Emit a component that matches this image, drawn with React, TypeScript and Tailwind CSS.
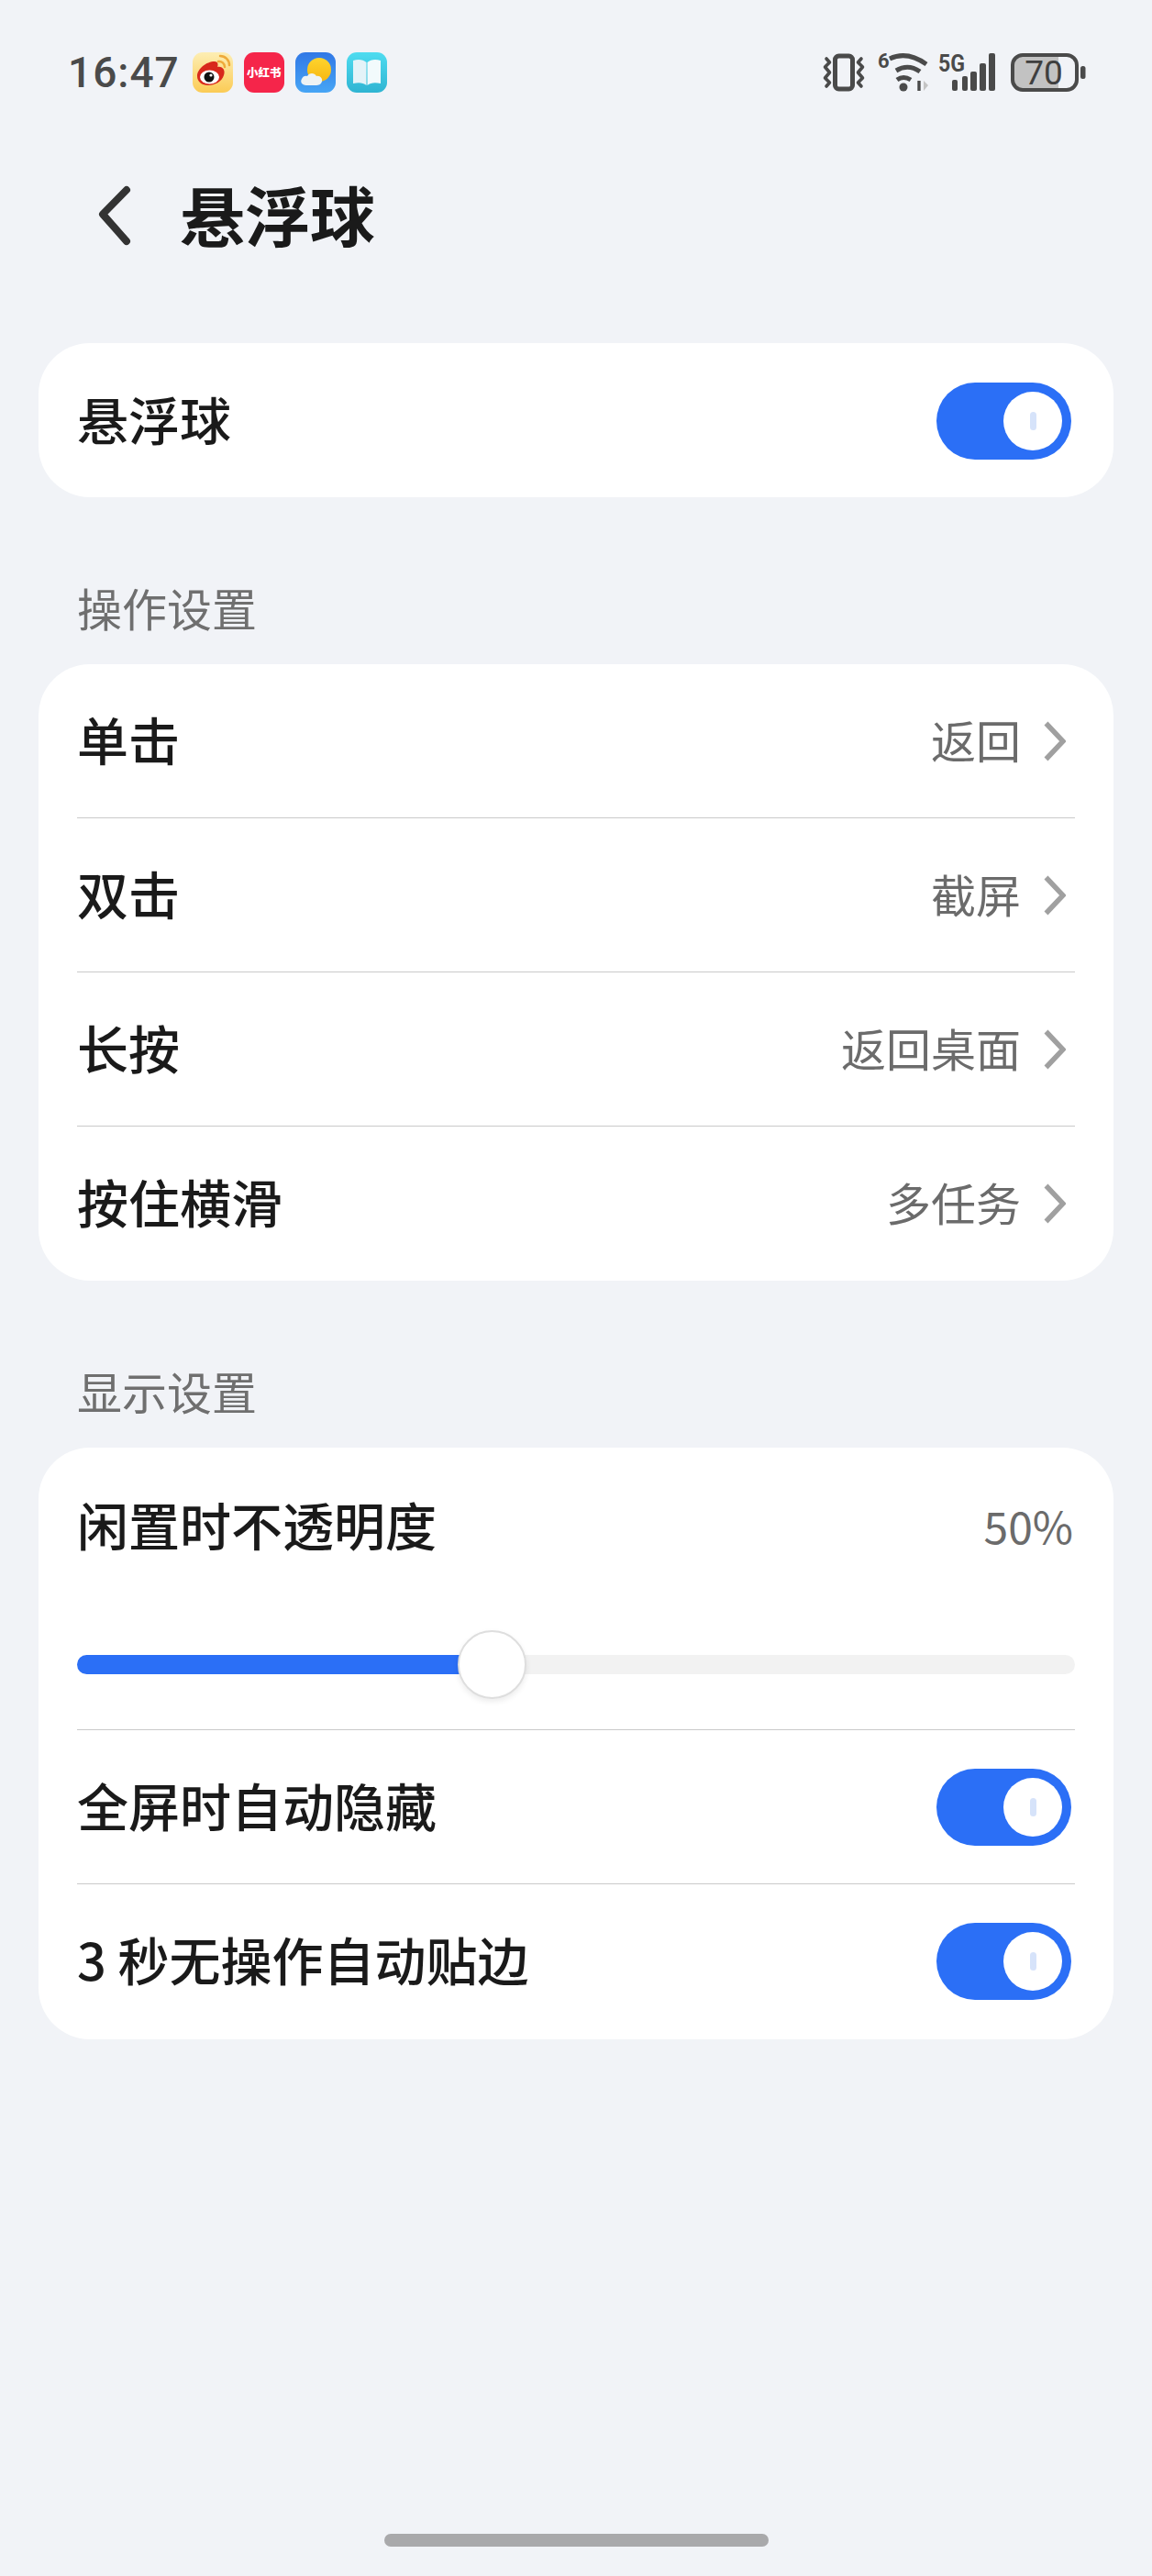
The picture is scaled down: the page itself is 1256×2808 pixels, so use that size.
const CJK = "font-['Noto_Sans_CJK_SC','Noto_Sans',sans-serif]";

function Toggle() {
  return (
    <div className="mr-[4px] flex h-[84px] w-[147px] shrink-0 items-center justify-end rounded-full bg-[#2b6ff6] pr-[10px]">
      <div className="flex h-[64px] w-[64px] items-center justify-center rounded-full bg-white">
        <div className="h-[20px] w-[7px] rounded-full bg-[#d6e3fa]" />
      </div>
    </div>
  );
}

function Chevron() {
  return (
    <svg width="24" height="44" viewBox="0 0 24 44" fill="none" stroke="#a0a0a0" strokeWidth="5.5" className="shrink-0">
      <path d="M2.5 2.5 L21 22 L2.5 41.5" />
    </svg>
  );
}

function Divider() {
  return <div className="mx-[42px] h-px bg-[#cacaca]" />;
}

function NavRow({ label, value }: { label: string; value: string }) {
  return (
    <div className="flex h-[167px] items-center justify-between px-[42px]">
      <span className="pb-[6px] text-[56px] font-medium leading-none text-[#1a1a1a]">{label}</span>
      <div className="flex items-center gap-[25px] pr-[10px]">
        <span className="pb-[5px] text-[49px] leading-none text-[#6b6b6b]">{value}</span>
        <Chevron />
      </div>
    </div>
  );
}

function ToggleRow({ label }: { label: string }) {
  return (
    <div className="flex h-[167px] items-center justify-between px-[42px]">
      <span className="pb-[6px] text-[56px] font-medium leading-none text-[#1a1a1a]">{label}</span>
      <Toggle />
    </div>
  );
}

function SectionTitle({ children }: { children: string }) {
  return <div className="mt-[90px] mb-[32px] h-[60px] px-[84px] text-[49px] leading-[60px] text-[#6f6f6f]">{children}</div>;
}

function Weibo() {
  return (
    <svg width="44" height="44" viewBox="0 0 44 44">
      <defs>
        <linearGradient id="wb" x1="0" y1="0" x2="0" y2="1">
          <stop offset="0" stopColor="#fdeeb4" />
          <stop offset="1" stopColor="#fbcb55" />
        </linearGradient>
      </defs>
      <rect width="44" height="44" rx="11" fill="url(#wb)" />
      <path d="M30 4 A10 10 0 0 1 40 14" fill="none" stroke="#eeaa3a" strokeWidth="2.5" strokeLinecap="round" />
      <path d="M28 10 A6 6 0 0 1 35 16" fill="none" stroke="#eeaa3a" strokeWidth="2.5" strokeLinecap="round" />
      <path d="M5 26 C5 18 15 10 24 10 C28 10 28 14 27 16 C33 15 36 20 34 25 C32 32 24 36 17 36 C10 36 5 32 5 26Z" fill="#d8281c" />
      <ellipse cx="18.5" cy="27" rx="10.5" ry="7.5" fill="#fff" />
      <circle cx="18" cy="27" r="5.5" fill="#111" />
      <circle cx="20" cy="25" r="1.6" fill="#fff" />
    </svg>
  );
}

function Weather() {
  return (
    <svg width="44" height="44" viewBox="0 0 44 44">
      <defs>
        <linearGradient id="sky" x1="0" y1="0" x2="0" y2="1">
          <stop offset="0" stopColor="#3178e6" />
          <stop offset="1" stopColor="#47a5f5" />
        </linearGradient>
        <linearGradient id="sun" x1="0" y1="0" x2="0" y2="1">
          <stop offset="0" stopColor="#fdd42e" />
          <stop offset="1" stopColor="#f8b710" />
        </linearGradient>
      </defs>
      <rect width="44" height="44" rx="11" fill="url(#sky)" />
      <circle cx="26" cy="19" r="13" fill="url(#sun)" />
      <path d="M12 36 C7 36 5 32 7 29 C8 26 11 25 13 26 C15 22 21 22 23 26 C27 25 30 29 29 32 C28 35 25 36 23 36Z" fill="#eef3f4" />
    </svg>
  );
}

function Book() {
  return (
    <svg width="44" height="44" viewBox="0 0 44 44">
      <defs>
        <linearGradient id="bk" x1="0" y1="0" x2="0" y2="1">
          <stop offset="0" stopColor="#4fdcf0" />
          <stop offset="1" stopColor="#2fb4d2" />
        </linearGradient>
      </defs>
      <rect width="44" height="44" rx="11" fill="url(#bk)" />
      <path d="M7 9 C13 7 18 8 21.5 11 V36 C18 33 13 32.5 7 34Z" fill="#e4f3f8" />
      <path d="M37 9 C31 7 26 8 22.5 11 V36 C26 33 31 32.5 37 34Z" fill="#f2fafc" />
    </svg>
  );
}

function StatusIcons() {
  return (
    <div className="flex items-center">
      <svg width="46" height="42" viewBox="0 0 46 42" fill="none" stroke="#4a4a4a" className="mr-[14px]">
        <rect x="13.5" y="3" width="19" height="36" rx="4" strokeWidth="5" />
        <path d="M4 6 L7.5 10 L2.5 15 L7.5 21 L2.5 27 L7.5 32 L4 36" strokeWidth="3.6" strokeLinecap="round" strokeLinejoin="round" />
        <path d="M42 6 L38.5 10 L43.5 15 L38.5 21 L43.5 27 L38.5 32 L42 36" strokeWidth="3.6" strokeLinecap="round" strokeLinejoin="round" />
      </svg>
      <svg width="56" height="42" viewBox="0 0 56 42" fill="none" className="mr-[10px] overflow-visible">
        <text x="0" y="16" fontSize="22" fontWeight="700" fill="#4a4a4a" fontFamily="Roboto, sans-serif">6</text>
        <path d="M13 6 Q32 -3 53 12" stroke="#4a4a4a" strokeWidth="5" />
        <path d="M20 19 Q33 11 46 20" stroke="#4a4a4a" strokeWidth="5" />
        <path d="M21 29 Q28 24 36 29" stroke="#4a4a4a" strokeWidth="5" />
        <circle cx="28" cy="37" r="4.5" fill="#4a4a4a" />
        <path d="M45 30 L45 41" stroke="#4a4a4a" strokeWidth="3.4" />
        <path d="M50 30 L50 41 L55 35Z" fill="#c4c4c4" />
      </svg>
      <svg width="63" height="42" viewBox="0 0 63 42" className="mr-[16px] overflow-visible" fill="#4a4a4a">
        <text x="0" y="20" fontSize="26" fontWeight="700" fontFamily="Roboto, sans-serif" textLength="29" lengthAdjust="spacingAndGlyphs">5G</text>
        <rect x="15" y="29" width="6" height="12" rx="2" />
        <rect x="26" y="25" width="6" height="16" rx="2" />
        <rect x="35" y="20" width="7" height="21" rx="2" />
        <rect x="45" y="11" width="7" height="30" rx="2" />
        <rect x="55" y="0" width="7" height="41" rx="2" />
      </svg>
      <svg width="82" height="42" viewBox="0 0 82 42" className="overflow-visible">
        <path d="M12 2 H52 V40 H12 A10 10 0 0 1 2 30 V12 A10 10 0 0 1 12 2Z" fill="#c2c2c2" />
        <rect x="2" y="2" width="70" height="38" rx="11" fill="none" stroke="#4a4a4a" strokeWidth="4" />
        <text x="36" y="34" textAnchor="middle" fontSize="37" fill="#3f3f3f" fontFamily="Roboto, sans-serif">70</text>
        <rect x="76" y="14" width="5.5" height="14" rx="2.5" fill="#4a4a4a" />
      </svg>
    </div>
  );
}

export default function App() {
  return (
    <div className={`flex h-[2808px] w-[1256px] flex-col overflow-hidden bg-[#f1f3f7] ${CJK}`}>
      {/* status bar */}
      <div className="mt-[57px] flex h-[44px] items-center justify-between pl-[74px] pr-[72px]">
        <div className="flex items-center">
          <span className="mr-[14px] font-['Roboto',sans-serif] text-[46px] font-medium leading-none tracking-[1px] text-[#4a4a4a]">16:47</span>
          <div className="flex gap-[12px]">
            <Weibo />
            <div className="flex h-[44px] w-[44px] items-center justify-center rounded-[11px] bg-[#f5254a] text-[12.5px] font-black leading-none text-white">小红书</div>
            <Weather />
            <Book />
          </div>
        </div>
        <StatusIcons />
      </div>

      {/* header */}
      <div className="mt-[89px] flex h-[90px] items-center pl-[105px]">
        <svg width="40" height="70" viewBox="0 0 40 70" fill="none" stroke="#333333" strokeWidth="8" strokeLinecap="round" strokeLinejoin="round" className="mr-[51px]">
          <path d="M33 7 L7 33.5 L33 63" />
        </svg>
        <span className="pb-[6px] text-[71px] font-bold leading-none text-[#1a1a1a]">悬浮球</span>
      </div>

      <div className="mx-[42px] mt-[94px] rounded-[56px] bg-white pt-px">
        <ToggleRow label="悬浮球" />
      </div>

      <SectionTitle>操作设置</SectionTitle>
      <div className="mx-[42px] rounded-[56px] bg-white pb-px">
        <NavRow label="单击" value="返回" />
        <Divider />
        <NavRow label="双击" value="截屏" />
        <Divider />
        <NavRow label="长按" value="返回桌面" />
        <Divider />
        <NavRow label="按住横滑" value="多任务" />
      </div>

      <SectionTitle>显示设置</SectionTitle>
      <div className="mx-[42px] rounded-[56px] bg-white pt-[56px] pb-[2px]">
        <div className="flex h-[60px] items-center justify-between px-[42px]">
          <span className="pb-[6px] text-[56px] font-medium leading-none text-[#1a1a1a]">闲置时不透明度</span>
          <span className="pr-[2px] pb-[5px] text-[48px] leading-none text-[#6b6b6b]">50%</span>
        </div>
        <div className="relative mx-[42px] mt-[83px] mb-[33px] flex h-[75px] items-center">
          <div className="h-[21px] w-full overflow-hidden rounded-full bg-[#f2f2f2]">
            <div className="h-full w-[430px] bg-[#2b6ff6]" />
          </div>
          <div className="absolute left-[415px] top-0 h-[75px] w-[75px] rounded-full border-2 border-[#dedede] bg-white shadow-[0_3px_6px_rgba(0,0,0,0.08)]" />
        </div>
        <Divider />
        <ToggleRow label="全屏时自动隐藏" />
        <Divider />
        <ToggleRow label="3 秒无操作自动贴边" />
      </div>

      <div className="mx-auto mt-auto mb-[32px] h-[14px] w-[419px] rounded-[7px] bg-[#a9a9ab]" />
    </div>
  );
}
